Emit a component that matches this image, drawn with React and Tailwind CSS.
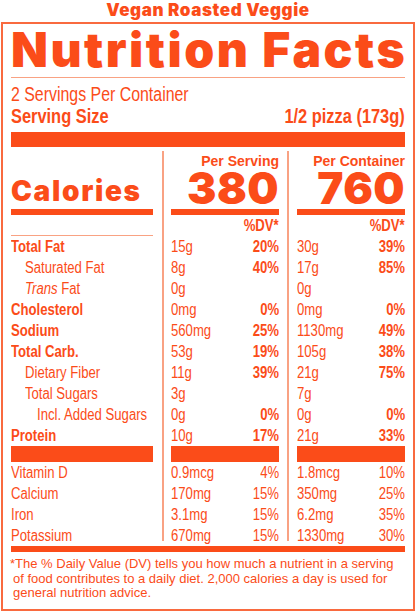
import React from 'react';

const heavy = "font-['Inter','Liberation_Sans',sans-serif] font-black";
const sans = "font-['Liberation_Sans',Arial,sans-serif]";

// Arial Narrow is Arial at 82% width; no narrow face is installed, so squeeze Liberation Sans
const N = ({ children, right, className = '' }) => (
  <span
    className={`inline-block whitespace-nowrap scale-x-[0.82] ${right ? 'origin-right' : 'origin-left'} ${className}`}
  >
    {children}
  </span>
);

const nutrients = [
  { label: 'Total Fat', bold: true, serving: ['15g', '20%'], container: ['30g', '39%'] },
  { label: 'Saturated Fat', indent: 1, serving: ['8g', '40%'], container: ['17g', '85%'] },
  { label: <><i>Trans</i> Fat</>, indent: 1, serving: ['0g', ''], container: ['0g', ''] },
  { label: 'Cholesterol', bold: true, serving: ['0mg', '0%'], container: ['0mg', '0%'] },
  { label: 'Sodium', bold: true, serving: ['560mg', '25%'], container: ['1130mg', '49%'] },
  { label: 'Total Carb.', bold: true, serving: ['53g', '19%'], container: ['105g', '38%'] },
  { label: 'Dietary Fiber', indent: 1, serving: ['11g', '39%'], container: ['21g', '75%'] },
  { label: 'Total Sugars', indent: 1, lineIndent: true, serving: ['3g', ''], container: ['7g', ''] },
  { label: 'Incl. Added Sugars', indent: 2, serving: ['0g', '0%'], container: ['0g', '0%'] },
  { label: 'Protein', bold: true, last: true, serving: ['10g', '17%'], container: ['21g', '33%'] },
];

const vitamins = [
  { label: 'Vitamin D', serving: ['0.9mcg', '4%'], container: ['1.8mcg', '10%'] },
  { label: 'Calcium', serving: ['170mg', '15%'], container: ['350mg', '25%'] },
  { label: 'Iron', serving: ['3.1mg', '15%'], container: ['6.2mg', '35%'] },
  { label: 'Potassium', last: true, serving: ['670mg', '15%'], container: ['1330mg', '30%'] },
];

const Cell = ({ children, last, lineIndent, className = '' }) => (
  <div className="h-[21px] flex flex-col">
    <div className={`flex-1 flex items-start pt-px leading-[20px] text-[16px] ${className}`}>{children}</div>
    {!last && <div className={`h-px bg-[#f9a283] ${lineIndent ? 'ml-[26px]' : ''}`} />}
  </div>
);

const LabelColumn = () => (
  <div className="w-[142px] shrink-0 pt-1">
    <div className="h-[64px] flex flex-col">
      <div className={`${heavy} mt-auto text-[28px] leading-none tracking-[0.06em]`}>Calories</div>
      <div className="mt-[4px] h-[6px] bg-[#fb4c19]" />
    </div>
    <Cell />
    {nutrients.map((n, i) => (
      <Cell
        key={i}
        last={n.last}
        lineIndent={n.lineIndent}
        className={`${n.indent === 1 ? 'pl-[14px]' : ''} ${n.indent === 2 ? 'pl-[26px]' : ''}`}
      >
        <N className={n.bold ? 'font-bold' : ''}>{n.label}</N>
      </Cell>
    ))}
    <div className="h-[16px] bg-[#fb4c19]" />
    {vitamins.map((v, i) => (
      <Cell key={i} last={v.last}>
        <N>{v.label}</N>
      </Cell>
    ))}
  </div>
);

const ValueColumn = ({ heading, calories, field }) => (
  <div className="w-[108px] shrink-0 pt-1">
    <div className="h-[64px] flex flex-col items-stretch">
      <div className={`pt-[3px] text-right ${sans} font-bold text-[14px] leading-[14px]`}>{heading}</div>
      <div className={`${heavy} mt-[2px] text-right text-[44px] leading-[36px] tracking-[0.01em]`}>{calories}</div>
      <div className="mt-auto h-[6px] bg-[#fb4c19]" />
    </div>
    <Cell className="justify-end">
      <N right className="font-bold">%DV*</N>
    </Cell>
    {nutrients.map((n, i) => (
      <Cell key={i} last={n.last} className="justify-between">
        <N>{n[field][0]}</N>
        <N right className="font-bold">{n[field][1]}</N>
      </Cell>
    ))}
    <div className="h-[16px] bg-[#fb4c19]" />
    {vitamins.map((v, i) => (
      <Cell key={i} last={v.last} className="justify-between">
        <N>{v[field][0]}</N>
        <N right>{v[field][1]}</N>
      </Cell>
    ))}
  </div>
);

const Divider = () => <div className="w-[2px] shrink-0 mt-1 mb-[5px] bg-[#f9a283]" />;

export default function App() {
  return (
    <div className="w-[416px] h-[611px] bg-white text-[#fb4c19] overflow-hidden">
      <div className={`${heavy} text-center text-[17px] leading-[18px] pt-[1px] tracking-[0.035em]`}>
        Vegan Roasted Veggie
      </div>
      <div className="mx-px mt-[3px] border-2 border-[#f96a3f] px-2 pb-[8px]">
        <div className={`${heavy} text-[48px] leading-[47px] pt-[2px] tracking-[0.052em] whitespace-nowrap`}>
          Nutrition Facts
        </div>
        <div className="mt-[4px] h-px bg-[#f9a283]" />
        <div className={sans}>
          <div className="mt-[5px] text-[19.4px] leading-[22px]">
            <N>2 Servings Per Container</N>
          </div>
          <div className="flex justify-between font-bold text-[20px] leading-[22px]">
            <N>Serving Size</N>
            <N right>1/2 pizza (173g)</N>
          </div>
          <div className="mt-[5px] h-[15px] bg-[#fb4c19]" />
          <div className="flex">
            <LabelColumn />
            <div className="w-[9px] shrink-0" />
            <Divider />
            <div className="w-[7px] shrink-0" />
            <ValueColumn heading="Per Serving" calories="380" field="serving" />
            <div className="w-[8px] shrink-0" />
            <Divider />
            <div className="w-[8px] shrink-0" />
            <ValueColumn heading="Per Container" calories="760" field="container" />
          </div>
          <div className="h-[6px] bg-[#fb4c19]" />
        </div>
        <p className={`mt-[5px] pl-[2px] -indent-[3px] ${sans} text-[13px] leading-[14.5px]`}>
          *The % Daily Value (DV) tells you how much a nutrient in a serving of food contributes to a daily diet. 2,000 calories a day is used for general nutrition advice.
        </p>
      </div>
    </div>
  );
}
